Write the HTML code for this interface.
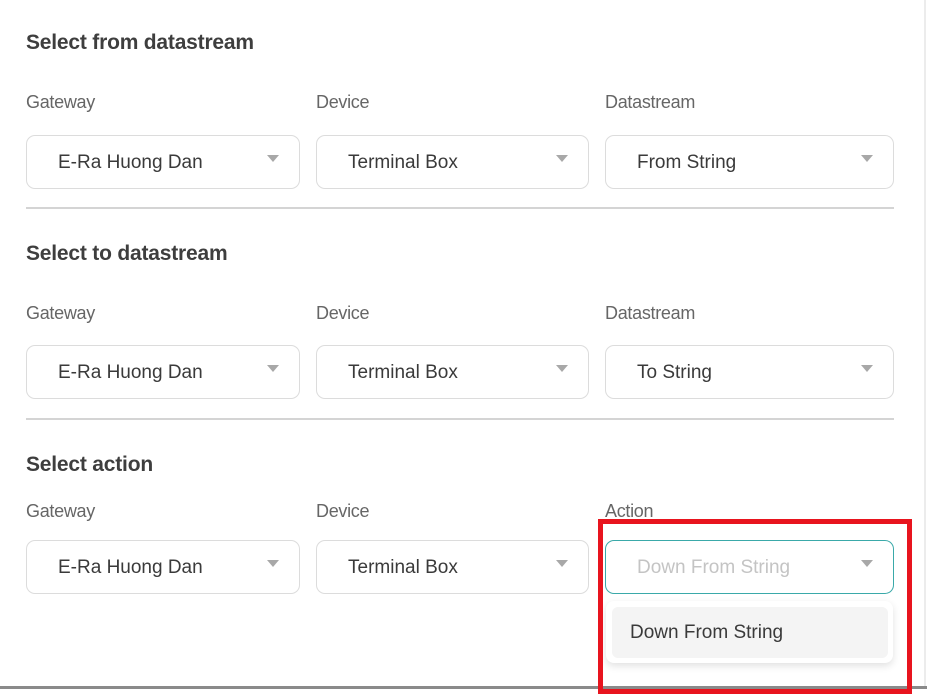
<!DOCTYPE html>
<html><head><style>
body{margin:0;width:927px;height:689px;background:#fff;position:relative;overflow:hidden;font-family:"Liberation Sans",sans-serif;color:#333}
.a{position:absolute}
h2{position:absolute;margin:0;font-size:21px;font-weight:bold;color:#3e3e3e;left:26px;letter-spacing:-0.2px}
.l{position:absolute;font-size:18px;color:#666;letter-spacing:-0.3px}
.b{position:absolute;height:54px;border:1px solid #dcdcdc;border-radius:9px;box-sizing:border-box;background:#fff}
.b span{position:absolute;left:31px;top:16px;font-size:19px;color:#3a3a3a}
.b i{position:absolute;right:20px;top:19px;width:0;height:0;border-left:6px solid transparent;border-right:6px solid transparent;border-top:7px solid #a8a8a8}
.hr{position:absolute;left:26px;width:868px;height:2px;background:#d4d4d4}
</style></head><body>
<div class="a" style="left:924px;top:0;width:2px;height:689px;background:#ececec"></div>
<div class="a" style="left:0;top:686px;width:927px;height:3px;background:#8a8a8a"></div>

<h2 style="top:31px">Select from datastream</h2>
<div class="l" style="left:26px;top:92px">Gateway</div>
<div class="l" style="left:316px;top:92px">Device</div>
<div class="l" style="left:605px;top:92px">Datastream</div>
<div class="b" style="left:26px;top:135px;width:274px"><span>E-Ra Huong Dan</span><i></i></div>
<div class="b" style="left:316px;top:135px;width:273px"><span>Terminal Box</span><i></i></div>
<div class="b" style="left:605px;top:135px;width:289px"><span>From String</span><i></i></div>
<div class="hr" style="top:207px"></div>

<h2 style="top:242px">Select to datastream</h2>
<div class="l" style="left:26px;top:303px">Gateway</div>
<div class="l" style="left:316px;top:303px">Device</div>
<div class="l" style="left:605px;top:303px">Datastream</div>
<div class="b" style="left:26px;top:345px;width:274px"><span>E-Ra Huong Dan</span><i></i></div>
<div class="b" style="left:316px;top:345px;width:273px"><span>Terminal Box</span><i></i></div>
<div class="b" style="left:605px;top:345px;width:289px"><span>To String</span><i></i></div>
<div class="hr" style="top:418px"></div>

<h2 style="top:453px">Select action</h2>
<div class="l" style="left:26px;top:501px">Gateway</div>
<div class="l" style="left:316px;top:501px">Device</div>
<div class="l" style="left:605px;top:501px">Action</div>
<div class="b" style="left:26px;top:540px;width:274px"><span>E-Ra Huong Dan</span><i></i></div>
<div class="b" style="left:316px;top:540px;width:273px"><span>Terminal Box</span><i></i></div>
<div class="b" style="left:605px;top:540px;width:289px;border:1.5px solid #3aa9a9"><span style="color:#c4c4c4">Down From String</span><i></i></div>

<div class="a" style="left:606px;top:601px;width:287px;height:62px;background:#fff;border-radius:8px;box-shadow:0 3px 8px rgba(0,0,0,0.12)"></div>
<div class="a" style="left:612px;top:607px;width:276px;height:51px;background:#f4f4f4;border-radius:6px"></div>
<div class="a" style="left:630px;top:622px;font-size:19px;color:#3a3a3a">Down From String</div>

<div class="a" style="left:598px;top:519px;width:314px;height:175px;border:5px solid #e8141e;box-sizing:border-box"></div>
</body></html>
